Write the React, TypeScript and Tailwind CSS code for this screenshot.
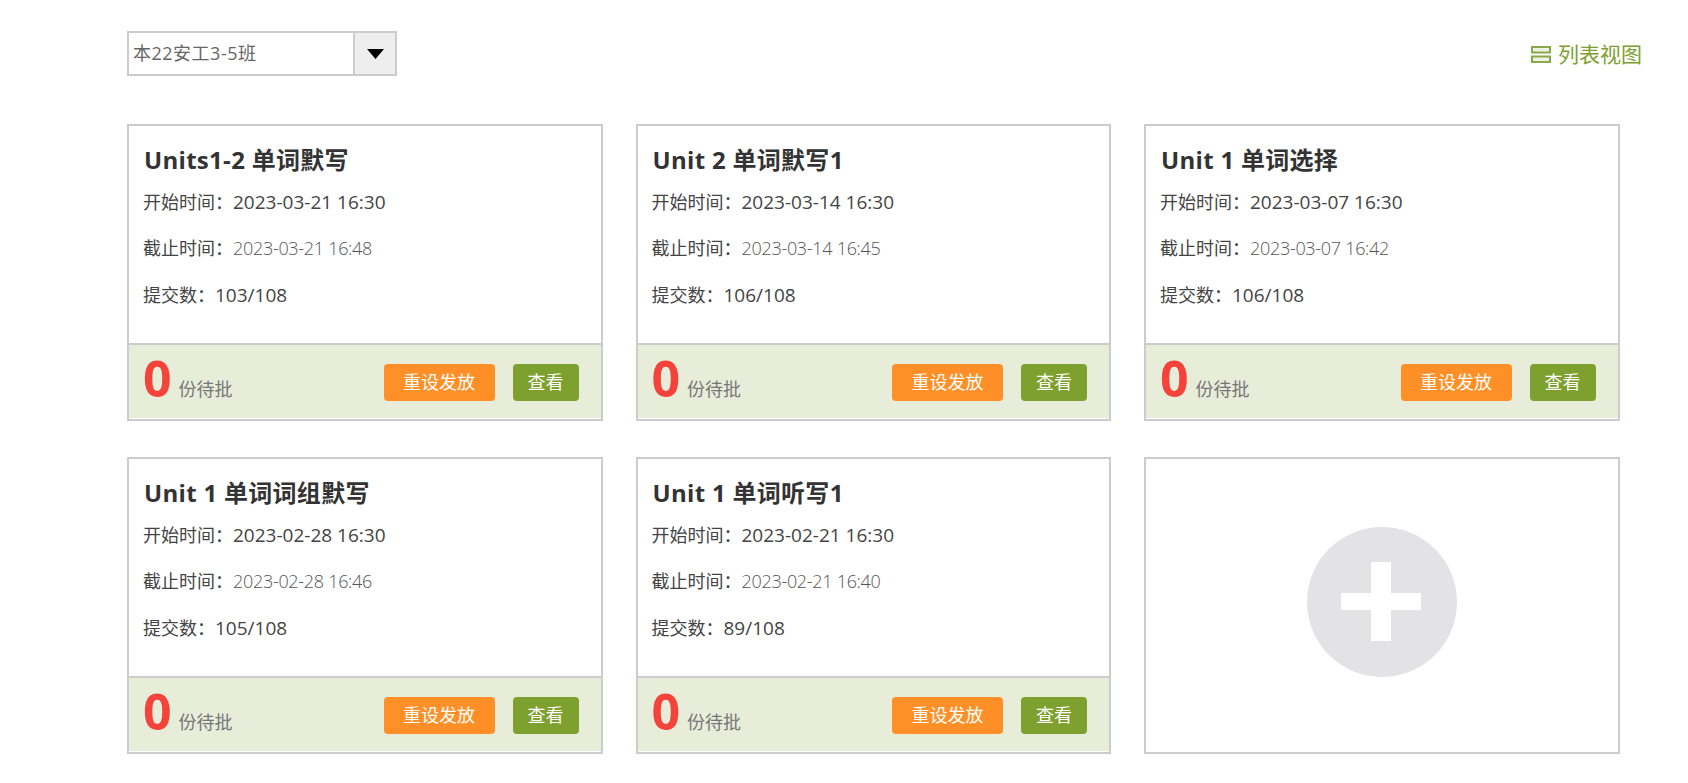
const font = "font-['Open_Sans','Noto_Sans_CJK_SC',sans-serif]";

const tasks = [
  { title: "Units1-2 单词默写", start: "2023-03-21 16:30", end: "2023-03-21 16:48", submitted: "103/108" },
  { title: "Unit 2 单词默写1", start: "2023-03-14 16:30", end: "2023-03-14 16:45", submitted: "106/108" },
  { title: "Unit 1 单词选择", start: "2023-03-07 16:30", end: "2023-03-07 16:42", submitted: "106/108" },
  { title: "Unit 1 单词词组默写", start: "2023-02-28 16:30", end: "2023-02-28 16:46", submitted: "105/108" },
  { title: "Unit 1 单词听写1", start: "2023-02-21 16:30", end: "2023-02-21 16:40", submitted: "89/108" },
];

type Task = (typeof tasks)[number];

function TaskCard({ task }: { task: Task }) {
  return (
    <div className="flex h-[297px] flex-col border-2 border-[#cccccc] bg-white">
      <div className="h-[217px] px-[14px] pt-[16px] text-[18px] leading-[46.5px] text-[#444444]">
        <h3 className="mb-[1px] pl-[1px] text-[24px] leading-[36px] font-bold tracking-[0.3px] text-[#333333]">{task.title}</h3>
        <p className="text-[19px]">
          <span className="text-[18px]">开始时间：</span>
          {task.start}
        </p>
        <p className="mt-[-1px] mb-[1px] font-light tracking-[-0.3px] text-[#555555]">
          <span className="font-normal tracking-normal text-[#444444]">截止时间：</span>
          {task.end}
        </p>
        <p className="text-[19px]">
          <span className="text-[18px]">提交数：</span>
          {task.submitted}
        </p>
      </div>
      <div className="flex h-[75px] items-center justify-between border-t-2 border-[#cccccc] bg-[#e8edda] pr-[22px] pl-[14px]">
        <div className="mt-[-7px] flex items-baseline gap-[7px]">
          <span className="text-[50px] leading-[60px] font-bold text-[#f4433b]">0</span>
          <span className="relative top-[-1px] text-[18px] text-[#777777]">份待批</span>
        </div>
        <div className="mt-[2px] flex gap-[18px] text-[18px] text-white">
          <button className="h-[37px] w-[111px] rounded-[4px] bg-[#ff8f26]">重设发放</button>
          <button className="h-[37px] w-[66px] rounded-[4px] bg-[#7da02e]">查看</button>
        </div>
      </div>
    </div>
  );
}

export default function App() {
  return (
    <div className={`${font} h-[783px] overflow-hidden bg-white`}>
      <div className="flex items-center justify-between pt-[31px] pr-[46px] pl-[127px]">
        <div className="flex h-[45px] w-[270px] border-2 border-[#cccccc]">
          <div className="flex-1 pl-[4px] text-[18px] leading-[41px] tracking-[0.5px] text-[#666666]">本22安工3-5班</div>
          <div className="flex w-[42px] items-center justify-center border-l-2 border-[#cccccc] bg-[#eeeeee]">
            <svg width="17" height="10" viewBox="0 0 17 10">
              <path d="M0 0H17L8.5 10Z" fill="#000000" />
            </svg>
          </div>
        </div>
        <div className="mt-[2px] flex items-center gap-[7px] text-[21px] text-[#7da02e]">
          <svg width="20" height="17" viewBox="0 0 20 17" fill="#eef2e2" stroke="#8aa84a" strokeWidth="2">
            <rect x="1" y="1" width="18" height="5.5" />
            <rect x="1" y="10.5" width="18" height="5.5" />
          </svg>
          列表视图
        </div>
      </div>

      <div className="mt-[48px] grid w-[1493px] grid-cols-[475.5px_475.5px_475.5px] gap-x-[33px] gap-y-[36px] pl-[127px]">
        {tasks.map((task) => (
          <TaskCard key={task.title} task={task} />
        ))}
        <div className="flex h-[297px] items-center justify-center border-2 border-[#cccccc] bg-white pb-[7px]">
          <svg width="150" height="150" viewBox="0 0 150 150">
            <circle cx="75" cy="75" r="75" fill="#e3e3e5" />
            <path d="M64 35H84V66H114V83H84V114H64V83H34V66H64Z" fill="#ffffff" />
          </svg>
        </div>
      </div>
    </div>
  );
}
